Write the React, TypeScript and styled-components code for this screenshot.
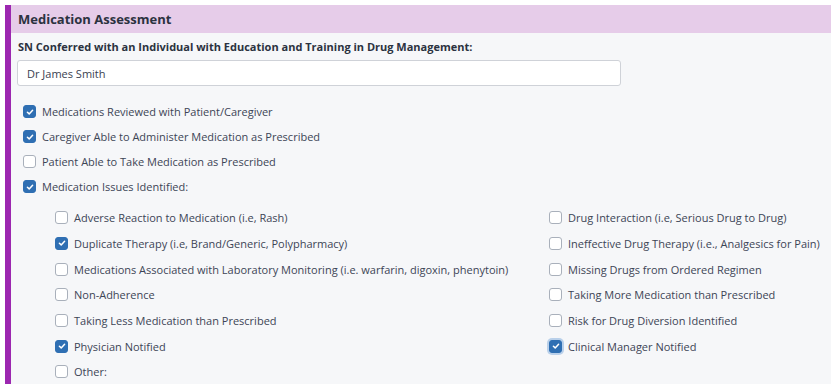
import React, { useState } from "react";
import styled, { createGlobalStyle } from "styled-components";

const GlobalStyle = createGlobalStyle`
  html, body {
    margin: 0;
    padding: 0;
    background: #ffffff;
    font-family: "Open Sans", "Liberation Sans", sans-serif;
  }
`;

interface Option {
  label: string;
  checked: boolean;
  focused?: boolean;
}

const mainOptions: Option[] = [
  { label: "Medications Reviewed with Patient/Caregiver", checked: true },
  { label: "Caregiver Able to Administer Medication as Prescribed", checked: true },
  { label: "Patient Able to Take Medication as Prescribed", checked: false },
  { label: "Medication Issues Identified:", checked: true },
];

const leftIssues: Option[] = [
  { label: "Adverse Reaction to Medication (i.e, Rash)", checked: false },
  { label: "Duplicate Therapy (i.e, Brand/Generic, Polypharmacy)", checked: true },
  {
    label: "Medications Associated with Laboratory Monitoring (i.e. warfarin, digoxin, phenytoin)",
    checked: false,
  },
  { label: "Non-Adherence", checked: false },
  { label: "Taking Less Medication than Prescribed", checked: false },
  { label: "Physician Notified", checked: true },
  { label: "Other:", checked: false },
];

const rightIssues: Option[] = [
  { label: "Drug Interaction (i.e, Serious Drug to Drug)", checked: false },
  { label: "Ineffective Drug Therapy (i.e., Analgesics for Pain)", checked: false },
  { label: "Missing Drugs from Ordered Regimen", checked: false },
  { label: "Taking More Medication than Prescribed", checked: false },
  { label: "Risk for Drug Diversion Identified", checked: false },
  { label: "Clinical Manager Notified", checked: true, focused: true },
];

const Section = styled.section`
  margin-top: 5px;
  margin-left: 5px;
  border-left: 6px solid #9c27b0;
  background: #f6f7f9;
  height: 379px;
  overflow: hidden;
`;

const Header = styled.div`
  background: #e6cce9;
  height: 28px;
  display: flex;
  align-items: center;
  padding-left: 7px;
  font-size: 13px;
  font-weight: 700;
  color: #2b3240;
`;

const Body = styled.div`
  padding: 6px 0 0 7px;
`;

const FieldLabel = styled.div`
  font-size: 11px;
  font-weight: 700;
  color: #2b3240;
  line-height: 16px;
`;

const TextInput = styled.input`
  display: block;
  box-sizing: border-box;
  margin: 5px 0 0 -1px;
  width: 604px;
  height: 26px;
  border: 1px solid #cfd2d8;
  border-radius: 3px;
  background: #ffffff;
  padding: 0 9px;
  font-family: inherit;
  font-size: 11px;
  color: #3a4150;
  outline: none;
`;

const MainList = styled.div`
  margin-top: 13px;
  padding-left: 5px;
  display: flex;
  flex-direction: column;
`;

const IssueGrid = styled.div`
  margin-top: 6px;
  padding-left: 37px;
  display: grid;
  grid-template-columns: 494px 1fr;
`;

const IssueColumn = styled.div`
  display: flex;
  flex-direction: column;
`;

const Row = styled.label<{ $h: number }>`
  display: flex;
  align-items: center;
  gap: 6px;
  height: ${(p) => p.$h}px;
  font-size: 11px;
  color: #3d4556;
  cursor: pointer;
  white-space: nowrap;
`;

const Box = styled.span<{ $checked: boolean; $focused?: boolean }>`
  flex: none;
  box-sizing: border-box;
  width: 13px;
  height: 13px;
  border-radius: 3px;
  border: 1px solid ${(p) => (p.$checked ? "#2f6fb3" : "#a9b0bb")};
  background: ${(p) => (p.$checked ? "#2f6fb3" : "#ffffff")};
  display: flex;
  align-items: center;
  justify-content: center;
  box-shadow: ${(p) => (p.$focused ? "0 0 0 2px #b9d0ea" : "none")};
`;

const Check = () => (
  <svg width="8" height="8" viewBox="0 0 8 8">
    <path
      d="M1.4 4.2 L3.2 5.9 L6.6 2.2"
      fill="none"
      stroke="#ffffff"
      strokeWidth="1.5"
      strokeLinecap="round"
      strokeLinejoin="round"
    />
  </svg>
);

const CheckRow: React.FC<{ option: Option; h: number }> = ({ option, h }) => {
  const [on, setOn] = useState(option.checked);
  return (
    <Row $h={h} onClick={() => setOn(!on)}>
      <Box $checked={on} $focused={option.focused}>
        {on && <Check />}
      </Box>
      {option.label}
    </Row>
  );
};

const App: React.FC = () => {
  const [name, setName] = useState("Dr James Smith");
  return (
    <>
      <GlobalStyle />
      <Section>
        <Header>Medication Assessment</Header>
        <Body>
          <FieldLabel>
            SN Conferred with an Individual with Education and Training in Drug Management:
          </FieldLabel>
          <TextInput value={name} onChange={(e) => setName(e.target.value)} />
          <MainList>
            {mainOptions.map((o) => (
              <CheckRow key={o.label} option={o} h={25} />
            ))}
          </MainList>
          <IssueGrid>
            <IssueColumn>
              {leftIssues.map((o) => (
                <CheckRow key={o.label} option={o} h={25.67} />
              ))}
            </IssueColumn>
            <IssueColumn>
              {rightIssues.map((o) => (
                <CheckRow key={o.label} option={o} h={25.67} />
              ))}
            </IssueColumn>
          </IssueGrid>
        </Body>
      </Section>
    </>
  );
};

export default App;
